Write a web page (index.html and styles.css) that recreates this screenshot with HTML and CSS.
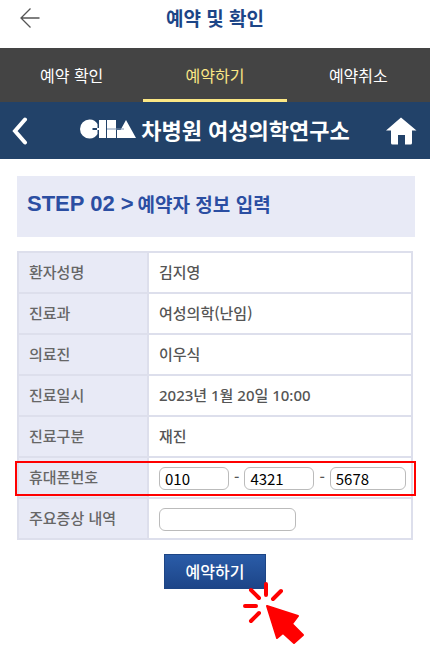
FILE: index.html
```html
<!DOCTYPE html>
<html lang="ko">
<head>
    <meta charset="UTF-8">
    <meta name="viewport" content="width=device-width, initial-scale=1.0">
    <title>예약 및 확인</title>
    <link rel="stylesheet" href="styles.css">
</head>
<body>
    <header class="top-bar">
        <a href="#" class="top-back" aria-label="뒤로">
            <svg width="20" height="20" viewBox="0 0 20 20"><path d="M10.500 0.500L1 10l9.500 9.500M1 10h18.500" fill="none" stroke="#555" stroke-width="1.300"/></svg>
        </a>
        <h1>예약 및 확인</h1>
    </header>

    <nav class="tabs">
        <a href="#">예약 확인</a>
        <a href="#" class="active">예약하기</a>
        <a href="#">예약취소</a>
    </nav>

    <div class="brand-bar">
        <a href="#" aria-label="이전">
            <svg width="16" height="28" viewBox="0 0 16 28"><path d="M13 2.500L3 14l10 11.500" fill="none" stroke="#fff" stroke-width="4" stroke-linecap="round"/></svg>
        </a>
        <div class="brand">
            <svg width="57" height="20" viewBox="0 0 57 20">
                <path d="M10.500 0.500c4 0 6.500 2 8 4.500v4h-5v2h5v4c-1.500 2.500-4 4.500-8 4.500a9.500 9.500 0 0 1 0-19z" fill="#fff"/>
                <path d="M18 9h3v2h-3zM20 1h7v18h-7zM28 1h9v18h-9zM47 1l10 18H38v-8h3.500z" fill="#fff"/>
                <path d="M28 10h17" stroke="#7f95b3" stroke-width="1"/>
            </svg>
            <span>차병원 여성의학연구소</span>
        </div>
        <a href="#" aria-label="홈">
            <svg width="32" height="28" viewBox="0 0 32 28"><path d="M16 0.500L31.500 13.500H27V26q0 1.500-1.500 1.500H20V18h-7v9.500H7.500Q6 27.500 6 26V13.500H1z" fill="#fff"/></svg>
        </a>
    </div>

    <main>
        <h2><span class="step">STEP 02 &gt;</span> <span>예약자 정보 입력</span></h2>

        <form>
            <table>
                <tr><th scope="row">환자성명</th><td>김지영</td></tr>
                <tr><th scope="row">진료과</th><td>여성의학(난임)</td></tr>
                <tr><th scope="row">의료진</th><td>이우식</td></tr>
                <tr><th scope="row">진료일시</th><td class="date">2023년 1월 20일 10:00</td></tr>
                <tr><th scope="row">진료구분</th><td>재진</td></tr>
                <tr class="highlight">
                    <th scope="row"><label for="phone1">휴대폰번호</label></th>
                    <td class="field">
                        <div class="phone">
                            <input type="text" id="phone1" value="010">
                            <span>-</span>
                            <input type="text" value="4321" aria-label="휴대폰번호 가운데 자리">
                            <span>-</span>
                            <input type="text" class="last" value="5678" aria-label="휴대폰번호 끝자리">
                        </div>
                    </td>
                </tr>
                <tr>
                    <th scope="row"><label for="symptom">주요증상 내역</label></th>
                    <td class="field"><input type="text" id="symptom" class="symptom"></td>
                </tr>
            </table>

            <div class="submit">
                <button type="button">예약하기</button>
                <svg class="pointer" width="64" height="64" viewBox="0 0 64 64">
                    <path d="M24 2v11M9 8l8 8M39 9l-8 8M3 24h11M17 31l-8 8" fill="none" stroke="#f00" stroke-width="4" stroke-linecap="round"/>
                    <path d="M25 24l31 10-6 8 11 11-9 8-11-10-6 5z" fill="#f00" stroke="#f00" stroke-width="2" stroke-linejoin="round"/>
                </svg>
            </div>
        </form>
    </main>
</body>
</html>
```
FILE: styles.css
```css
* {
    box-sizing: border-box;
}

body {
    margin: 0;
    background-color: #fff;
    color: #555;
    font-family: "Noto Sans CJK KR", sans-serif;
    font-size: 15px;
    line-height: 20px;
}

a {
    color: inherit;
    text-decoration: none;
}

svg {
    display: block;
}

.top-bar {
    display: grid;
    grid-template-columns: 40px 1fr 40px;
    align-items: center;
    height: 48px;
    padding-bottom: 12px;
}

.top-back {
    padding-left: 20px;
}

h1 {
    margin: 0;
    text-align: center;
    font-size: 19px;
    font-weight: 700;
    color: #1c4587;
}

.tabs {
    display: flex;
    height: 54px;
    background-color: #444;
    color: #fff;
    font-size: 16px;
}

.tabs a {
    flex: 1;
    text-align: center;
    line-height: 54px;
}

.tabs .active {
    color: #fbe785;
    border-bottom: 3px solid #fbe785;
}

/* Barra azul con el logo */
.brand-bar {
    display: grid;
    grid-template-columns: 32px 1fr 32px;
    align-items: center;
    height: 57px;
    padding: 0 13px 0 12px;
    background-color: #224269;
    color: #fff;
}

.brand {
    display: flex;
    justify-content: center;
    align-items: center;
    gap: 5px;
    padding-bottom: 4px;
    font-size: 22px;
    font-weight: 700;
}

main {
    padding: 17px 15px 56px 17px;
}

h2 {
    display: flex;
    align-items: center;
    gap: 4px;
    height: 61px;
    margin: 0 0 14px;
    padding: 0 10px 6px;
    background-color: #e8eaf6;
    color: #2b4ea2;
    font-size: 19px;
    font-weight: 700;
}

.step {
    font-family: "Liberation Sans", sans-serif;
    font-size: 22px;
}

form {
    padding-right: 2px;
}

table {
    width: 100%;
    border-collapse: collapse;
    table-layout: fixed;
}

th,
td {
    height: 41px;
    padding: 0 0 2px 10px;
    border: 2px solid #dddfec;
    text-align: left;
    font-weight: 500;
}

th {
    width: 130px;
    background-color: #e8eaf6;
    color: #666;
}

.field {
    padding: 2px 0 0 10px;
}

.date {
    font-family: "Noto Sans", "Noto Sans CJK KR", sans-serif;
}

/* Marco rojo sobre la fila del teléfono */
.highlight {
    position: relative;
}

.highlight th::after {
    content: "";
    position: absolute;
    top: 4px;
    bottom: 2px;
    left: -3px;
    right: -4px;
    border: 2px solid #f00;
    pointer-events: none;
}

input {
    width: 70px;
    height: 23px;
    padding: 0 5px;
    border: 1px solid #bbb;
    border-radius: 6px;
    background-color: #fff;
    color: #000;
    font: inherit;
    font-weight: 400;
}

.phone {
    display: flex;
    gap: 5px;
}

.phone .last {
    width: 76px;
}

.symptom {
    display: block;
    width: 137px;
}

.submit {
    position: relative;
    width: 102px;
    margin: 14px auto 0;
}

button {
    display: block;
    width: 100%;
    height: 35px;
    padding: 0 0 2px;
    border: 1px solid #1d4585;
    background: linear-gradient(#2a5ca8, #1d4588);
    color: #fff;
    font-family: inherit;
    font-size: 16px;
    font-weight: 500;
}

.pointer {
    position: absolute;
    top: 28px;
    left: 78px;
}
```
